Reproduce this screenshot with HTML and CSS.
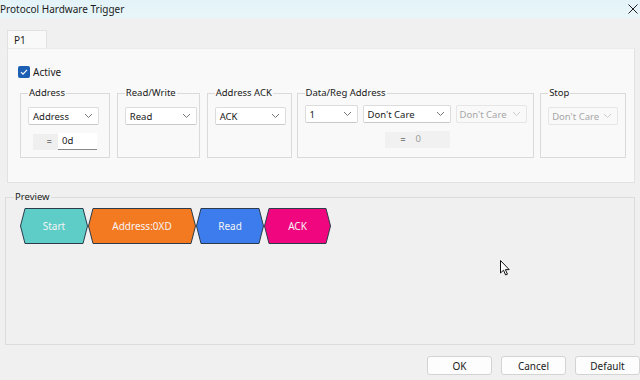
FILE: index.html
```html
<!DOCTYPE html>
<html lang="en">
<head>
  <meta charset="UTF-8">
  <title>Protocol Hardware Trigger</title>
  <link rel="stylesheet" href="styles.css">
</head>
<body>
  <div class="titlebar">
    <span class="title">Protocol Hardware Trigger</span>
    <svg class="close" width="10" height="10" viewBox="0 0 10 10"><path d="M0.5 0.5 L9.5 9.5 M9.5 0.5 L0.5 9.5" stroke="#222" stroke-width="1" fill="none"/></svg>
  </div>

  <div class="dialog">
    <div class="tabs">
      <div class="tab">P1</div>
    </div>

    <div class="pane">
      <div class="check-row">
        <span class="checkbox">
          <svg width="12" height="12" viewBox="0 0 12 12"><path d="M3 6.2 L5 8.2 L9 3.8" stroke="#fff" stroke-width="1.2" fill="none"/></svg>
        </span>
        <span>Active</span>
      </div>

      <div class="groups">
        <fieldset class="group g-address">
          <legend>Address</legend>
          <div class="combo w71"><span>Address</span><svg class="chev" width="9" height="6" viewBox="0 0 9 6"><path d="M1 1 L4.5 4.5 L8 1" stroke="#777" fill="none"/></svg></div>
          <div class="eq-row">
            <span class="eq">=</span>
            <span class="field">0d</span>
          </div>
        </fieldset>

        <fieldset class="group g-rw">
          <legend>Read/Write</legend>
          <div class="combo w72"><span>Read</span><svg class="chev" width="9" height="6" viewBox="0 0 9 6"><path d="M1 1 L4.5 4.5 L8 1" stroke="#777" fill="none"/></svg></div>
        </fieldset>

        <fieldset class="group g-ack">
          <legend>Address ACK</legend>
          <div class="combo w71"><span>ACK</span><svg class="chev" width="9" height="6" viewBox="0 0 9 6"><path d="M1 1 L4.5 4.5 L8 1" stroke="#777" fill="none"/></svg></div>
        </fieldset>

        <fieldset class="group g-data">
          <legend>Data/Reg Address</legend>
          <div class="combo-row">
            <div class="combo w53"><span>1</span><svg class="chev" width="9" height="6" viewBox="0 0 9 6"><path d="M1 1 L4.5 4.5 L8 1" stroke="#777" fill="none"/></svg></div>
            <div class="combo w88"><span>Don't Care</span><svg class="chev" width="9" height="6" viewBox="0 0 9 6"><path d="M1 1 L4.5 4.5 L8 1" stroke="#777" fill="none"/></svg></div>
            <div class="combo w71 disabled"><span>Don't Care</span><svg class="chev" width="9" height="6" viewBox="0 0 9 6"><path d="M1 1 L4.5 4.5 L8 1" stroke="#ccc" fill="none"/></svg></div>
          </div>
          <div class="eq-row data-eq">
            <span class="eq">=</span>
            <span class="field disabled">0</span>
          </div>
        </fieldset>

        <fieldset class="group g-stop">
          <legend>Stop</legend>
          <div class="combo w70 disabled"><span>Don't Care</span><svg class="chev" width="9" height="6" viewBox="0 0 9 6"><path d="M1 1 L4.5 4.5 L8 1" stroke="#ccc" fill="none"/></svg></div>
        </fieldset>
      </div>
    </div>

    <fieldset class="preview">
      <legend>Preview</legend>
      <div class="frames">
        <svg class="frame" width="68" height="36" viewBox="0 0 68 36">
          <polygon points="0.5,18 5,0.5 63,0.5 67.5,18 63,35.5 5,35.5" fill="#5ecdc8" stroke="#2b3b4a"/>
          <text x="34" y="21.5" text-anchor="middle">Start</text>
        </svg>
        <svg class="frame" width="108" height="36" viewBox="0 0 108 36">
          <polygon points="0.5,18 5,0.5 103,0.5 107.5,18 103,35.5 5,35.5" fill="#f47a22" stroke="#2b3b4a"/>
          <text x="54" y="21.5" text-anchor="middle">Address:0XD</text>
        </svg>
        <svg class="frame" width="68" height="36" viewBox="0 0 68 36">
          <polygon points="0.5,18 5,0.5 63,0.5 67.5,18 63,35.5 5,35.5" fill="#3d7cec" stroke="#2b3b4a"/>
          <text x="34" y="21.5" text-anchor="middle">Read</text>
        </svg>
        <svg class="frame" width="67" height="36" viewBox="0 0 67 36">
          <polygon points="0.5,18 5,0.5 62,0.5 66.5,18 62,35.5 5,35.5" fill="#f0077f" stroke="#2b3b4a"/>
          <text x="33.5" y="21.5" text-anchor="middle">ACK</text>
        </svg>
      </div>
    </fieldset>

    <div class="buttons">
      <button class="btn">OK</button>
      <button class="btn">Cancel</button>
      <button class="btn">Default</button>
    </div>
  </div>

  <!-- mouse pointer captured in the screenshot -->
  <svg class="pointer" width="10" height="17" viewBox="0 0 10 17"><path d="M0.5 0.5 L0.5 13 L3.5 10.2 L5.6 15 L7.4 14.2 L5.4 9.6 L9.2 9.6 Z" fill="#fff" stroke="#111" stroke-width="1"/></svg>
</body>
</html>
```

FILE: styles.css
```css
/* Base */
* {
  box-sizing: border-box;
  margin: 0;
  padding: 0;
}
body {
  width: 640px;
  height: 380px;
  overflow: hidden;
  font-family: 'Noto Sans', 'Open Sans', sans-serif;
  font-size: 9.5px;
  color: #1a1a1a;
  background: #f0f0f0;
  position: relative;
}

/* Title bar */
.titlebar {
  height: 18px;
  background: linear-gradient(180deg, #e3f3f8, #e9f6f9);
  display: flex;
  align-items: center;
  justify-content: space-between;
  padding: 0 2px 0 0;
}
.title {
  font-size: 10px;
  color: #1b1b1b;
}

/* Dialog body */
.dialog {
  padding: 12px 5px 0 5px;
}
.tabs {
  display: flex;
  padding-left: 2px;
}
.tab {
  width: 40px;
  height: 18px;
  background: #f9f9f9;
  border: 1px solid #e2e2e2;
  border-bottom: none;
  padding: 2px 0 0 6px;
  font-size: 10px;
}
.pane {
  margin-left: 2px;
  height: 135px;
  background: #f9f9f9;
  border: 1px solid #e2e2e2;
  border-top: 1px solid #ececec;
  padding: 11px 8px 0 10px;
}
.check-row {
  height: 23px;
  display: flex;
  align-items: center;
  gap: 3px;
  font-size: 10px;
}
.checkbox {
  width: 12px;
  height: 12px;
  border-radius: 2px;
  background: #1c5fb3;
  display: flex;
}

/* Group boxes */
.groups {
  display: flex;
  margin-top: 3px;
  margin-left: 2px;
}
.group {
  border: 1px solid #dadada;
  height: 72px;
  padding: 7px 0 0 7px;
}
.group legend {
  padding: 0 1px;
  line-height: 14px;
  color: #1a1a1a;
}
.g-address { width: 90px; }
.g-rw { width: 83px; margin-left: 7px; }
.g-ack { width: 85px; margin-left: 7px; }
.g-data { width: 238px; margin-left: 5px; }
.g-stop { width: 86px; margin-left: 6px; }

.combo-row {
  display: flex;
  gap: 5px;
  margin-top: -2px;
}
.combo {
  height: 18px;
  background: #fff;
  border: 1px solid #dcdcdc;
  border-bottom-color: #c9c9c9;
  border-radius: 2px;
  display: flex;
  align-items: center;
  justify-content: space-between;
  padding: 0 5px 0 4px;
  white-space: nowrap;
  overflow: hidden;
}
.combo.disabled {
  background: #f9f9f9;
  border-color: #e6e6e6;
  color: #a6a6a6;
  padding-left: 3px;
}
.w53 { width: 53px; }
.w70 { width: 70px; }
.w71 { width: 71px; }
.w72 { width: 72px; }
.w88 { width: 88px; }

.eq-row {
  display: flex;
  align-items: center;
  margin-top: 8px;
  margin-left: 5px;
  height: 17px;
}
.eq {
  width: 25px;
  height: 16px;
  background: #efefef;
  text-align: right;
  padding-right: 6px;
  line-height: 16px;
}
.field {
  width: 39px;
  height: 17px;
  background: #fff;
  border-bottom: 1px solid #888;
  padding-left: 4px;
  line-height: 16px;
}
.data-eq {
  margin-left: 80px;
  margin-top: 8px;
}
.data-eq .eq {
  width: 30px;
  background: #f1f1f1;
  padding-right: 9px;
}
.field.disabled {
  width: 35px;
  background: #f1f1f1;
  border-bottom: none;
  color: #9a9a9a;
  padding-left: 1px;
}

/* Preview */
.preview {
  margin-top: 7px;
  height: 155px;
  border: 1px solid #dcdcdc;
  padding: 4px 0 0 8px;
}
.preview legend {
  padding: 0 1px;
  line-height: 14px;
}
.frames {
  display: flex;
  gap: 0;
  margin-left: 6px;
}
.frame text {
  font-family: 'Noto Sans', 'Open Sans', sans-serif;
  font-size: 10px;
  fill: #f4f4f4;
}

/* Buttons */
.buttons {
  display: flex;
  justify-content: flex-end;
  gap: 9px;
  margin-top: 11px;
  margin-right: -5px;
}
.btn {
  width: 65px;
  height: 19px;
  background: #fdfdfd;
  border: 1px solid #d3d3d3;
  border-radius: 3px;
  font-family: 'Noto Sans', 'Open Sans', sans-serif;
  font-size: 10px;
  color: #1a1a1a;
}

.pointer {
  position: absolute;
  left: 500px;
  top: 260px;
}
```
